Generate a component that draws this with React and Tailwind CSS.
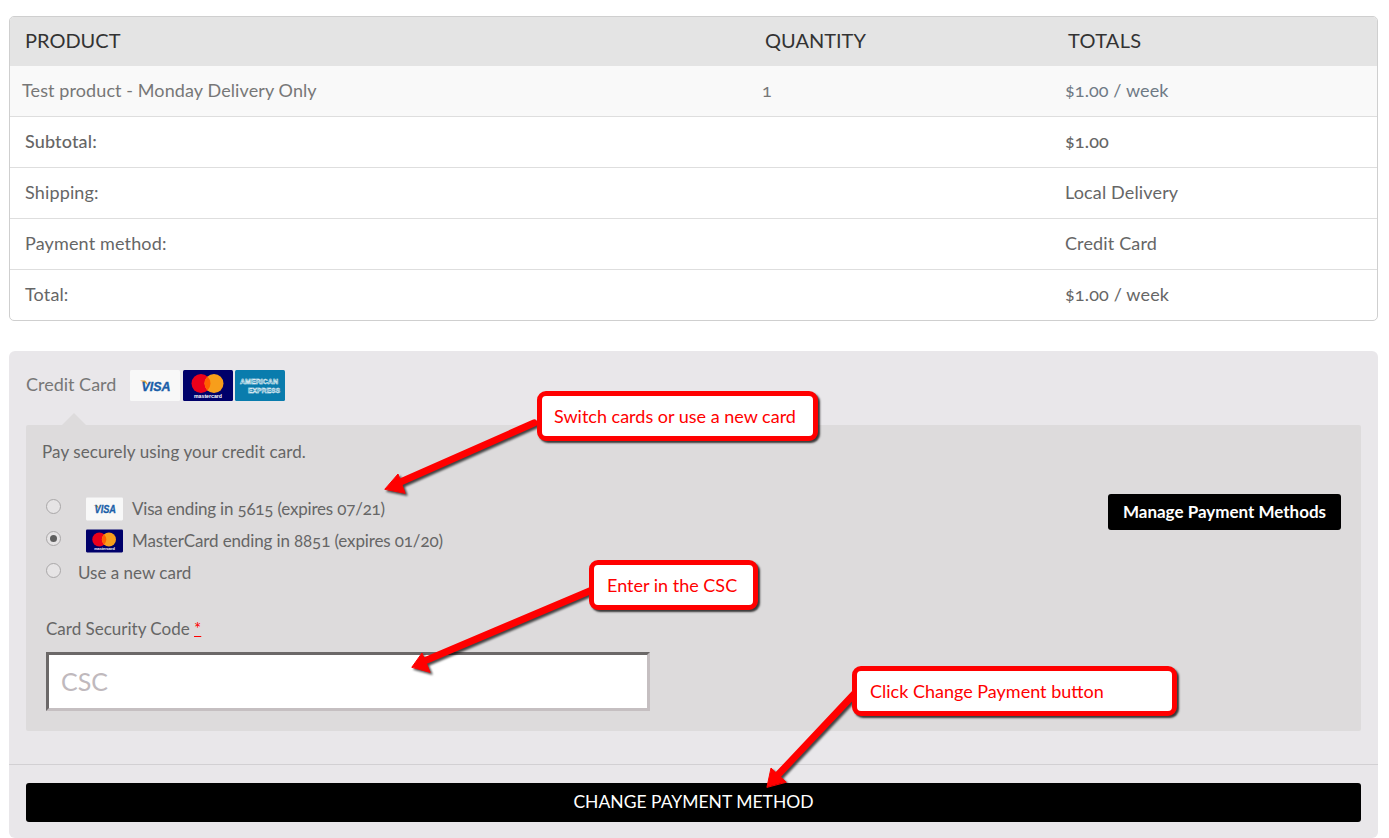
import React from 'react';

const baseFont = { fontFamily: '"Lato", "Open Sans", sans-serif' };

function VisaCard({ className }) {
  return (
    <svg viewBox="0 0 50 31" className={className}>
      <rect width="50" height="31" rx="1.5" fill="#f8f8f8" />
      <path d="M10 10.5 L15 10.5 Q17 11.5 18 16 Q15 12 10 10.5 Z" fill="#e8a33a" />
      <text x="11.5" y="20.5" fontSize="13.5" fontWeight="900" fontStyle="italic" fill="#1a5ea8" stroke="#1a5ea8" strokeWidth="0.4" fontFamily="Liberation Sans, sans-serif" textLength="29" lengthAdjust="spacingAndGlyphs">VISA</text>
    </svg>
  );
}

function MasterCard({ className }) {
  return (
    <svg viewBox="0 0 50 31" className={className}>
      <rect width="50" height="31" rx="1.5" fill="#00006a" />
      <circle cx="18" cy="13.5" r="9.5" fill="#eb001b" />
      <circle cx="31" cy="13.5" r="9.5" fill="#f79e1b" />
      <path d="M24.5 6.6 A9.5 9.5 0 0 1 24.5 20.4 A9.5 9.5 0 0 1 24.5 6.6 Z" fill="#ff5f00" />
      <text x="11" y="28" fontSize="5.5" fontWeight="700" fill="#fff" fontFamily="Liberation Sans, sans-serif" textLength="28" lengthAdjust="spacingAndGlyphs">mastercard</text>
    </svg>
  );
}

function AmexCard({ className }) {
  return (
    <svg viewBox="0 0 50 31" className={className}>
      <rect width="50" height="31" rx="1.5" fill="#0a7cad" />
      <g fill="#0a7cad" stroke="#fff" strokeWidth="0.5" fontSize="7.6" fontWeight="700" fontFamily="Liberation Sans, sans-serif">
        <text x="5" y="14" textLength="38" lengthAdjust="spacingAndGlyphs">AMERICAN</text>
        <text x="13" y="22.5" textLength="32" lengthAdjust="spacingAndGlyphs">EXPRESS</text>
      </g>
    </svg>
  );
}

function Row({ label, value, bold }) {
  return (
    <div className={`flex h-[51px] items-center border-b border-[#dedede] pb-[2px] last:h-[50px] last:border-b-0 text-[18px] tracking-[0.15px] text-[#666] ${bold ? 'font-medium' : ''}`}>
      <div className="w-[1055px] pl-[15px]">{label}</div>
      <div>{value}</div>
    </div>
  );
}

function Radio({ checked }) {
  return (
    <span className="-mt-[6px] flex h-[15px] w-[15px] shrink-0 items-center justify-center rounded-full border border-[#a9a7a8] bg-[#e6e4e5]">
      {checked && <span className="h-[7px] w-[7px] rounded-full bg-[#5f5f5f]" />}
    </span>
  );
}

function Callout({ className, children }) {
  return (
    <div
      className={`absolute flex h-[50px] items-center rounded-[9px] border-[5px] border-[#ff0000] bg-white text-[18px] text-[#ff0000] shadow-[2px_2px_2px_rgba(0,0,0,0.75)] ${className}`}
      style={{ fontFamily: '"Lato", sans-serif' }}
    >
      {children}
    </div>
  );
}

export default function App() {
  return (
    <div className="relative h-[838px] overflow-hidden bg-white pl-[9px] pr-[11px] pt-[16px] oldstyle-nums" style={baseFont}>
      {/* Order table */}
      <div className="overflow-hidden rounded-[5px] border border-[#cfcfcf]">
        <div className="flex h-[49px] items-center bg-[#e4e4e4] pb-[3px] text-[20px] text-[#333]">
          <div className="w-[740px] pl-[15px]">PRODUCT</div>
          <div className="w-[302px] pl-[15px]">QUANTITY</div>
          <div className="pl-[16px] tracking-[0.3px]">TOTALS</div>
        </div>
        <div className="flex h-[51px] items-center border-b border-[#dedede] bg-[#f9f9f9] pb-[2px] text-[18px] tracking-[0.1px] text-[#777]">
          <div className="w-[740px] pl-[12px]">Test product - Monday Delivery Only</div>
          <div className="w-[302px] pl-[12px] text-[18px]">1</div>
          <div className="pl-[13px] text-[#6f7a85]">$1.00 / week</div>
        </div>
        <Row label="Subtotal:" value="$1.00" bold />
        <Row label="Shipping:" value="Local Delivery" />
        <Row label="Payment method:" value="Credit Card" />
        <Row label="Total:" value="$1.00 / week" />
      </div>

      {/* Payment panel */}
      <div className="mt-[30px] h-[487px] rounded-[6px] bg-[#e9e7ea] pt-[19px]">
        <div className="px-[17px]">
          <div className="flex h-[31px] items-center text-[18px] text-[#777]">
            <span className="-mt-[2px] w-[104px]">Credit Card</span>
            <VisaCard className="h-[31px] w-[50px]" />
            <MasterCard className="ml-[3px] h-[31px] w-[50px]" />
            <AmexCard className="ml-[2px] h-[31px] w-[50px]" />
          </div>

          <div className="relative mt-[24px] h-[306px] rounded-[2px] bg-[#dddbdc] px-[20px] pt-[16px] text-[#666]">
            <div className="absolute -top-[12px] left-[36px] h-0 w-0 border-x-[12px] border-b-[12px] border-x-transparent border-b-[#dddbdc]" />
            <p className="-ml-[4px] text-[17px] leading-[22px] tracking-[0.1px]">Pay securely using your credit card.</p>

            <div className="mt-[30px] flex items-start justify-between">
              <div className="text-[17px]">
                <div className="flex h-[32px] items-center">
                  <Radio />
                  <VisaCard className="ml-[25px] h-[24px] w-[37px]" />
                  <span className="ml-[9px] tracking-[-0.2px]">Visa ending in 5615 (expires 07/21)</span>
                </div>
                <div className="flex h-[32px] items-center">
                  <Radio checked />
                  <MasterCard className="ml-[25px] h-[24px] w-[37px]" />
                  <span className="ml-[9px] tracking-[-0.13px]">MasterCard ending in 8851 (expires 01/20)</span>
                </div>
                <div className="flex h-[32px] items-center">
                  <Radio />
                  <span className="ml-[17px]">Use a new card</span>
                </div>
              </div>
              <button className="mt-[1px] flex h-[36px] w-[233px] items-center justify-center rounded-[3px] bg-black text-[17px] font-bold text-white">
                Manage Payment Methods
              </button>
            </div>

            <label className="mt-[29px] block text-[17px] leading-[22px]">
              Card Security Code <span className="text-[#ff0000] underline">*</span>
            </label>
            <input
              placeholder="CSC"
              className="mt-[12px] block h-[59px] w-[604px] border-[3px] border-t-[#6b6868] border-r-[#c5bfc1] border-b-[#c5bfc1] border-l-[#6b6868] bg-white pb-[2px] pl-[12px] text-[25px] outline-none placeholder:text-[#c0b9bd]"
            />
          </div>
        </div>

        <div className="mt-[33px] border-t border-[#d2d0d3] px-[17px] pt-[18px]">
          <button className="flex h-[39px] w-full items-center justify-center rounded-[3px] bg-black text-[17.5px] text-white">
            CHANGE PAYMENT METHOD
          </button>
        </div>
      </div>

      {/* Annotation arrows */}
      <svg className="pointer-events-none absolute left-0 top-0 h-[838px] w-[1389px] drop-shadow-[2px_2px_1px_rgba(0,0,0,0.7)]" viewBox="0 0 1389 838">
        <g fill="#ff0000" stroke="#ff0000" strokeLinecap="round">
          <path d="M534 423 L396 484" strokeWidth="7" fill="none" />
          <path d="M385 489 L398 474 L405 493 Z" strokeWidth="1" />
          <path d="M592 590 L422 662" strokeWidth="7" fill="none" />
          <path d="M412 667 L422 653 L430 672 Z" strokeWidth="1" />
          <path d="M856 692 L775 778" strokeWidth="7" fill="none" />
          <path d="M767 787 L771 768 L786 782 Z" strokeWidth="1" />
        </g>
      </svg>

      {/* Annotation boxes */}
      <Callout className="left-[537px] top-[391px] w-[281px] pl-[12px]">Switch cards or use a new card</Callout>
      <Callout className="left-[589px] top-[560px] w-[169px] pl-[13px]">Enter in the CSC</Callout>
      <Callout className="left-[852px] top-[666px] w-[325px] pl-[13px]">Click Change Payment button</Callout>
    </div>
  );
}
